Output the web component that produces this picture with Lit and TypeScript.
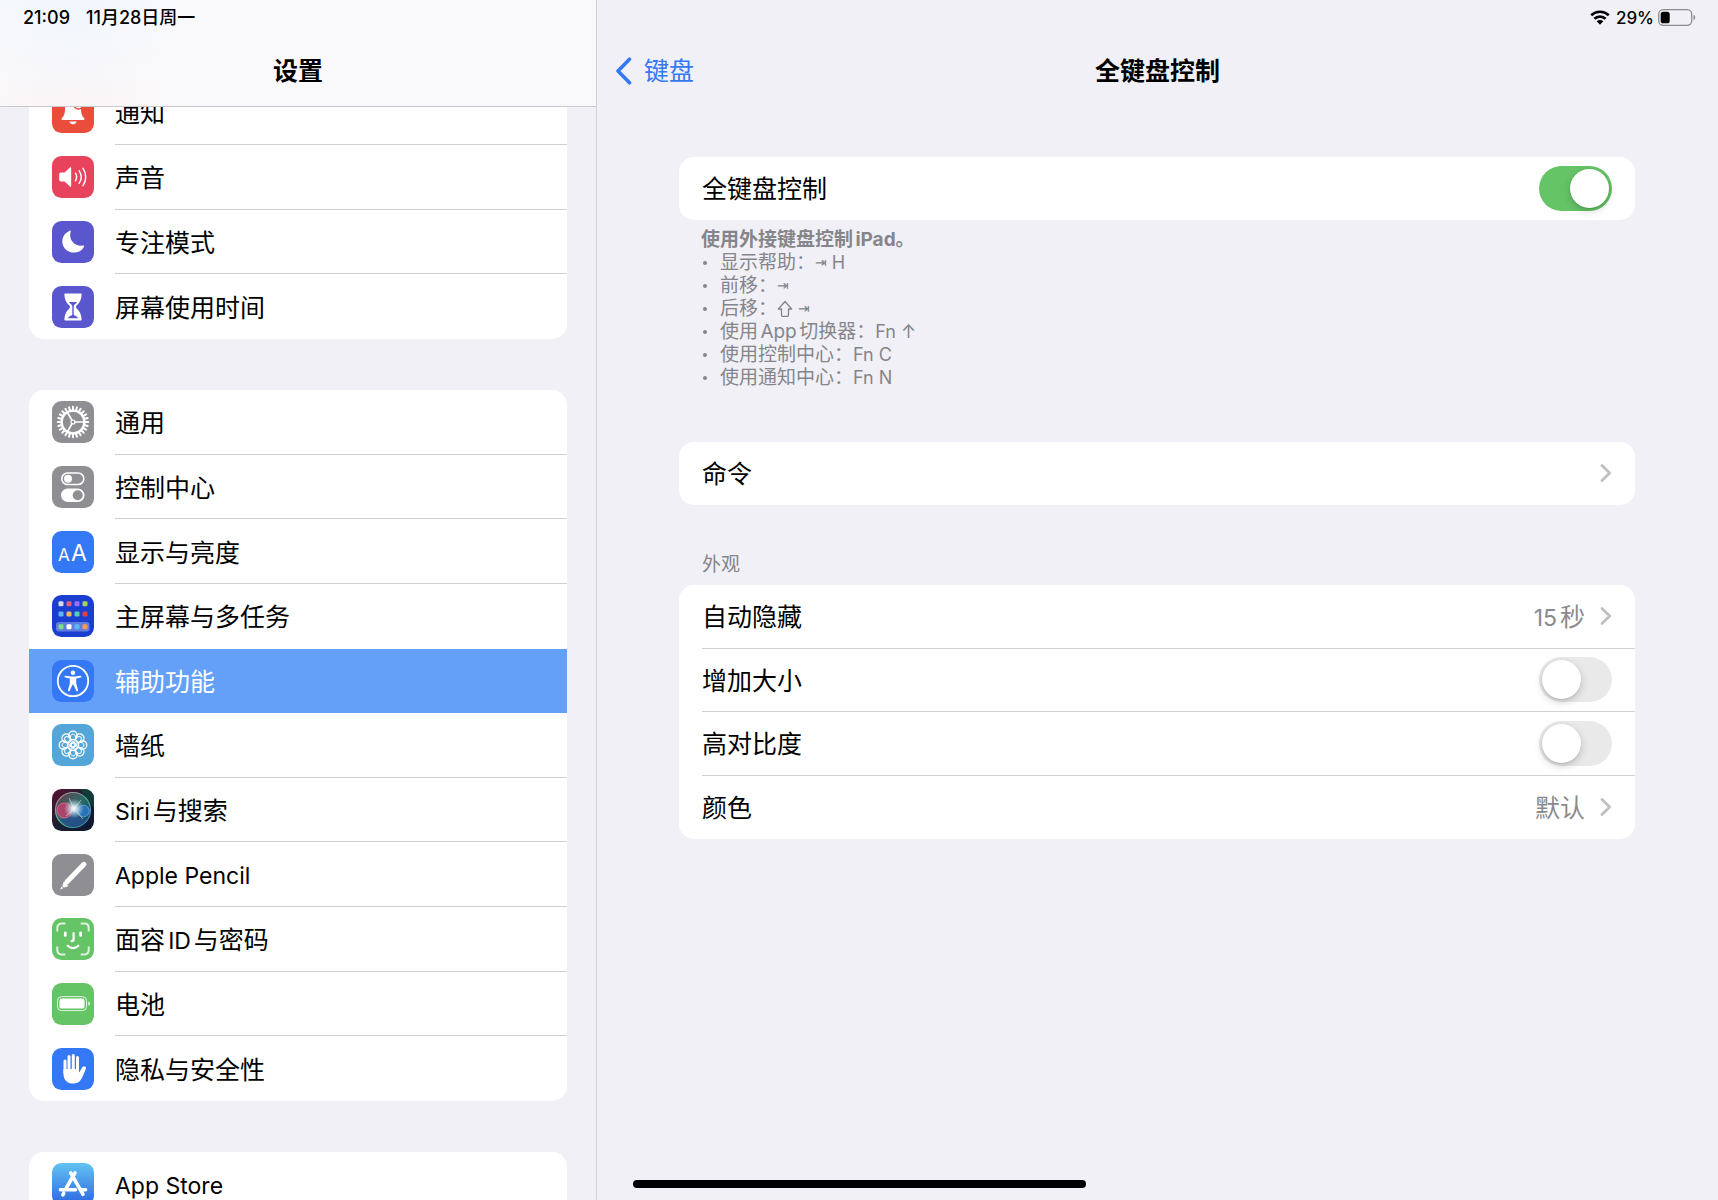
import { LitElement, html, svg, css, nothing, type SVGTemplateResult } from "lit";
import { customElement, property, state } from "lit/decorators.js";
import { classMap } from "lit/directives/class-map.js";

const range = (n: number) => Array.from({ length: n }, (_, i) => i);

/* Splits a label into runs so that Latin words can be set a little smaller than the Chinese text. */
const runs = (text: string) =>
  text
    .split(/([A-Za-z0-9][A-Za-z0-9 ]*)/)
    .filter(Boolean)
    .map((part) => (/^[A-Za-z0-9]/.test(part) ? html`<span class="latin">${part}</span>` : part));

const ICONS: Record<string, { fill: string; art: SVGTemplateResult }> = {
  bell: {
    fill: "#eb4d3d",
    art: svg`
      <path fill="#fff" d="M21 8c-5.6 0-8 4.200-8 9.500 0 5.500-1.200 7.500-3 9.400-1 1.100-.6 2.100.8 2.100h20.400c1.400 0 1.800-1 .8-2.100-1.800-1.900-3-3.900-3-9.400C29 12.200 26.600 8 21 8z"/>
      <path fill="#fff" d="M17.500 30.500h7c-.3 1.700-1.700 2.800-3.500 2.800s-3.200-1.100-3.500-2.800z"/>
      <circle cx="26.500" cy="13" r="5" fill="#fff" stroke="#eb4d3d" stroke-width="1.500"/>`,
  },
  sound: {
    fill: "#e8435c",
    art: svg`
      <path fill="#fff" d="M9 16.500h3.500l5.400-5.100c.6-.6 1.300-.2 1.300.6v18c0 .8-.7 1.200-1.300.6l-5.400-5.100H9c-1 0-1.800-.7-1.800-1.700v-5.600c0-1 .8-1.700 1.800-1.700z"/>
      <path fill="none" stroke="#fff" stroke-width="1.500" stroke-linecap="round" d="M23.400 17.200c1.500 2.300 1.500 5.300 0 7.600M27.200 14.800c2.500 3.700 2.500 8.700 0 12.400M31 12.400c3.600 5.200 3.600 12 0 17.200"/>`,
  },
  moon: {
    fill: "#5956ce",
    art: svg`<path fill="#fff" d="M17.700 9.700c.6-.5 1.300-.1 1 .7-2.400 7.600 3.200 15.200 12.400 14.200.8-.1 1.200.6.8 1.300C29.900 29.500 26.300 31.600 22 31.600c-6.500 0-11.700-4.900-11.700-11.200 0-4.500 2.600-8.600 7.400-10.700z"/>`,
  },
  hourglass: {
    fill: "#5956ce",
    art: svg`
      <path fill="#fff" d="M13.500 7.500h15c.8 0 1.200.5 1.100 1.300-.4 5.400-2 8.100-4.600 10.300-1.300 1.200-1.300 2.600 0 3.800 2.600 2.200 4.200 4.900 4.600 10.300.1.800-.3 1.300-1.100 1.300h-15c-.8 0-1.200-.5-1.100-1.300.4-5.400 2-8.100 4.600-10.300 1.300-1.200 1.300-2.600 0-3.800-2.600-2.200-4.200-4.900-4.600-10.300-.1-.8.300-1.300 1.100-1.300z"/>
      <path fill="#5956ce" d="M17 16h8c-.7 1.100-1.500 1.800-2.300 2.500-.8.700-1 1.300-1 2.500v7.500c0 1 3.200 1.300 4.500 3.700h-10.400c1.300-2.400 4.500-2.700 4.500-3.700V21c0-1.200-.2-1.800-1-2.500-.8-.7-1.600-1.400-2.300-2.500z"/>`,
  },
  gear: {
    fill: "#8e8e93",
    art: svg`
      <g stroke="#fff" stroke-width="2" stroke-linecap="round">
        ${range(24).map((i) => svg`<path d="M21 5.800v3.600" transform="rotate(${i * 15} 21 21)"/>`)}
      </g>
      <circle cx="21" cy="21" r="11.400" fill="none" stroke="#fff" stroke-width="2.400"/>
      <g stroke="#fff" stroke-width="1.700">
        ${[0, 120, 240].map((a) => svg`<path d="M22.500 21h10" transform="rotate(${a} 21 21)"/>`)}
      </g>
      <circle cx="21" cy="21" r="2" fill="none" stroke="#fff" stroke-width="1.200"/>`,
  },
  toggles: {
    fill: "#8e8e93",
    art: svg`
      <rect x="9.800" y="7" width="22" height="11.500" rx="5.750" fill="none" stroke="#fff" stroke-width="1.600"/>
      <circle cx="16" cy="12.700" r="4" fill="#fff"/>
      <rect x="9" y="22.500" width="23.500" height="13.500" rx="6.750" fill="#fff"/>
      <circle cx="25.700" cy="29.200" r="5" fill="#8e8e93"/>`,
  },
  text: {
    fill: "#3478f6",
    art: svg`
      <text class="glyph" x="6" y="30" font-size="17">A</text>
      <text class="glyph" x="19" y="30" font-size="23">A</text>`,
  },
  home: {
    fill: "#1a3fd0",
    art: svg`
      <rect x="4" y="27" width="33.500" height="9.500" rx="3" fill="#5f7de0"/>
      ${[
        ["#d9d9f2", "#ee5c6e", "#9b6cf5", "#a8cf62"],
        ["#5bb8f5", "#f5b553", "#5accb0", "#e0433f"],
        ["#79dd88", "#ffffff", "#5bb8f5", "#f59a52"],
      ].map((line, r) =>
        line.map((c, i) => svg`<rect x=${6.5 + i * 8} y=${[6.3, 16.5, 29.3][r]} width="5" height="5" rx="1.300" fill=${c}/>`),
      )}`,
  },
  access: {
    fill: "#3478f6",
    art: svg`
      <circle cx="21" cy="21" r="15.200" fill="none" stroke="#fff" stroke-width="1.800"/>
      <circle cx="21" cy="12.800" r="2.200" fill="#fff"/>
      <path fill="#fff" d="M13.600 15.800c2.300.4 4.500.7 7.400.7s5.100-.3 7.400-.7c1.200-.2 1.500 1.400.3 1.700l-4.500 1v5l1.800 6.600c.3 1.300-1.200 1.700-1.700.6L21.500 24.800h-1l-2.800 5.900c-.5 1.100-2 .7-1.700-.6l1.800-6.600v-5l-4.500-1c-1.200-.3-.9-1.900.3-1.700z"/>`,
  },
  flower: {
    fill: "#55a6d8",
    art: svg`
      <g fill="none" stroke="#fff">
        <g stroke-width="1.300">${range(8).map((i) => svg`<circle cx="21" cy="11.400" r="4.200" transform="rotate(${i * 45} 21 21)"/>`)}</g>
        <g stroke-width="1">${range(8).map((i) => svg`<ellipse cx="21" cy="14.600" rx="2.600" ry="4.600" transform="rotate(${i * 45} 21 21)"/>`)}</g>
        <circle cx="21" cy="21" r="2"/>
      </g>`,
  },
  siri: {
    fill: "url(#siri-bg)",
    art: svg`
      <defs>
        <linearGradient id="siri-bg" x1="0" y1="0" x2="1" y2="1">
          <stop offset="0" stop-color="#5a1230"/><stop offset=".5" stop-color="#1c1f33"/><stop offset="1" stop-color="#0b1730"/>
        </linearGradient>
        <radialGradient id="siri-glow"><stop offset="0" stop-color="#fff"/><stop offset=".3" stop-color="#e4f4ff" stop-opacity=".8"/><stop offset="1" stop-color="#b8e0f0" stop-opacity="0"/></radialGradient>
        <linearGradient id="siri-ring" x1="0" y1="0" x2="1" y2="1">
          <stop offset="0" stop-color="#d8788c"/><stop offset=".5" stop-color="#4fb79a"/><stop offset="1" stop-color="#2f76b8"/>
        </linearGradient>
        <linearGradient id="siri-orb" x1="0" y1="0" x2="1" y2="1">
          <stop offset="0" stop-color="#6b3f50"/><stop offset=".5" stop-color="#2b6a66"/><stop offset="1" stop-color="#133a6b"/>
        </linearGradient>
      </defs>
      <path d="M28 0h5a9 9 0 0 1 9 9v10z" fill="#123c38"/>
      <circle cx="21" cy="21" r="17.500" fill="url(#siri-orb)" stroke="url(#siri-ring)" stroke-width="1.200"/>
      <path d="M8 31c6-2 11-6 13-10 2 5 7 9 13 10-6 8-19 9-26 0z" fill="#27508f" opacity=".8"/>
      <circle cx="12.500" cy="21.500" r="7.500" fill="#d83a6e" fill-opacity=".7" stroke="#ef6a92" stroke-width=".8"/>
      <circle cx="31.500" cy="22" r="5.800" fill="#2f7fd6" fill-opacity=".7" stroke="#5aa9ee" stroke-width=".8"/>
      <circle cx="22" cy="19.500" r="10" fill="url(#siri-glow)"/>
      <path d="M22 20 17 9M22 20l7-9M22 20l9 10M22 20l-8 7" stroke="#fff" stroke-width=".8" opacity=".6"/>`,
  },
  pencil: {
    fill: "#8e8e93",
    art: svg`
      <path stroke="#fff" stroke-width="5" stroke-linecap="round" d="M32 10.300 15 27.800"/>
      <path fill="#fff" d="M11.800 27.400l4.800 4.600-4.600 1.700-1.700-1.700zM9.600 32.600l1.700 1.600-3.400 1.200z"/>`,
  },
  face: {
    fill: "#65c466",
    art: svg`
      <path fill="none" stroke="#fff" stroke-opacity=".8" stroke-width="2" d="M5.300 13.500V10c0-2.700 1.700-4.400 4.400-4.400h3.600M28.700 5.600h3.600c2.700 0 4.400 1.700 4.400 4.400v3.500M36.700 28.500V32c0 2.700-1.700 4.400-4.400 4.400h-3.600M13.300 36.400H9.700c-2.700 0-4.400-1.700-4.400-4.400v-3.500"/>
      <g fill="none" stroke="#fff" stroke-width="2.200" stroke-linecap="round">
        <path stroke-width="2.800" d="M13.300 14.800v2.600M28.600 14.800v2.600"/>
        <path d="M21.600 15v6.300c0 1.300-.6 1.900-2 1.900M15.700 27.700c3 3.100 7.600 3.100 10.600 0"/>
      </g>`,
  },
  battery: {
    fill: "#65c466",
    art: svg`
      <rect x="5.500" y="13.600" width="29" height="14" rx="4" fill="none" stroke="#fff" stroke-opacity=".8" stroke-width="1"/>
      <rect x="7.500" y="15.600" width="25" height="10" rx="2.200" fill="#fff"/>
      <path fill="#fff" fill-opacity=".8" d="M36.300 18.300c2.400.8 2.400 3.800 0 4.600z"/>`,
  },
  hand: {
    fill: "#3478f6",
    art: svg`
      <g stroke="#fff" stroke-width="3" stroke-linecap="round">
        <path d="M13 13v12M17 8.600V23M21.300 7.400V23M25.500 9.400V23"/>
      </g>
      <path fill="#fff" d="M11.500 21h15.500v3.500c1.200-1.200 2-3.200 2.800-4.600.9-1.500 2.200-1.700 3.400-1.200.9.400 1 1 .6 2-1.500 4-3 7.900-4.800 10.800-2 3-4.500 4-7.800 4-5.700 0-9.700-3.600-9.700-9.600z"/>`,
  },
  store: {
    fill: "url(#store-bg)",
    art: svg`
      <defs><linearGradient id="store-bg" x1="0" y1="0" x2="0" y2="1">
        <stop offset="0" stop-color="#62c3f2"/><stop offset="1" stop-color="#2c66e3"/>
      </linearGradient></defs>
      <g stroke="#fff" stroke-width="3.600" stroke-linecap="round">
        <path d="M23 9.800 14.300 25M18.700 9.800 31 31.300M8.500 26.800h15M28.800 26.800h4.800M11.700 30.300l-.8 1.500"/>
      </g>`,
  },
};

interface Item { icon: string; label: string; }

const GROUPS: Item[][] = [
  [
    { icon: "bell", label: "通知" },
    { icon: "sound", label: "声音" },
    { icon: "moon", label: "专注模式" },
    { icon: "hourglass", label: "屏幕使用时间" },
  ],
  [
    { icon: "gear", label: "通用" },
    { icon: "toggles", label: "控制中心" },
    { icon: "text", label: "显示与亮度" },
    { icon: "home", label: "主屏幕与多任务" },
    { icon: "access", label: "辅助功能" },
    { icon: "flower", label: "墙纸" },
    { icon: "siri", label: "Siri与搜索" },
    { icon: "pencil", label: "Apple Pencil" },
    { icon: "face", label: "面容ID与密码" },
    { icon: "battery", label: "电池" },
    { icon: "hand", label: "隐私与安全性" },
  ],
  [{ icon: "store", label: "App Store" }],
];

@customElement("app-icon")
class AppIcon extends LitElement {
  @property() name = "";

  static styles = css`
    :host { display: block; width: 42px; height: 42px; }
    .art { display: block; width: 42px; height: 42px; }
    .glyph { fill: #fff; font-family: Inter, "Liberation Sans", sans-serif; }
  `;

  render() {
    const icon = ICONS[this.name];
    if (!icon) return nothing;
    return html`<svg class="art" viewBox="0 0 42 42" aria-hidden="true">
      <rect width="42" height="42" rx="9.500" fill=${icon.fill} />${icon.art}
    </svg>`;
  }
}

@customElement("settings-sidebar")
class SettingsSidebar extends LitElement {
  @state() private selected = "access";

  static styles = css`
    :host { display: block; height: 100%; overflow-y: auto; scrollbar-width: none; box-sizing: border-box; border-right: 1px solid #d3d2d8; }
    .header {
      position: sticky; top: 0; z-index: 1; box-sizing: border-box; height: 107px;
      display: grid; grid-template-rows: 35px 1fr;
      border-bottom: 1px solid #c9c8cd;
      background:
        radial-gradient(circle at 12% 0, #f1f7fe 0, transparent 22%),
        radial-gradient(circle at 12% 100%, #fcf5f5 0, transparent 22%),
        #f9f9fb;
    }
    .status { display: flex; align-items: center; gap: 16px; padding: 0 23px; font-size: 18px; line-height: 24px; font-weight: 500; text-autospace: no-autospace; }
    .title { margin: 0; font-size: 25px; line-height: 32px; font-weight: 700; text-align: center; padding-top: 20px; }
    .list { display: grid; gap: 51px; padding: 0 29px; margin-top: -27px; }
    .group { display: grid; background: #fff; border-radius: 15px; overflow: hidden; margin: 0; padding: 0; list-style: none; }
    .group.four { min-height: 259px; }
    .group.eleven { min-height: 711px; }
    .item { display: grid; min-height: 64px; }
    .row { display: grid; grid-template-columns: 42px 1fr; gap: 21px; align-items: center; padding-left: 23px; color: #000; text-decoration: none; font-size: 25px; line-height: 32px; }
    .label { align-self: stretch; display: flex; align-items: center; padding-top: 3px; border-bottom: 1px solid #d0d0d3; }
    .latin { font-size: 23px; }
    .item:last-child .label, .row.on .label { border-bottom-color: transparent; }
    .row.on { background: #64a0f8; color: #fff; }
    .group.eleven .item:has(+ .item .on) .label { border-bottom-color: transparent; }
  `;

  render() {
    return html`
      <header class="header">
        <div class="status"><span>21:09</span><span>11月28日周一</span></div>
        <h1 class="title">设置</h1>
      </header>
      <nav class="list">
        ${GROUPS.map((g) => html`
          <ul class=${classMap({ group: true, four: g.length === 4, eleven: g.length === 11 })}>
            ${g.map((it) => html`
              <li class="item">
                <a class=${classMap({ row: true, on: it.icon === this.selected })} href="#${it.icon}"
                  @click=${() => (this.selected = it.icon)}>
                  <app-icon .name=${it.icon}></app-icon><span class="label"><span>${runs(it.label)}</span></span>
                </a>
              </li>`)}
          </ul>`)}
      </nav>`;
  }
}

const chevron = html`<svg class="chevron" viewBox="0 0 12 20" aria-hidden="true">
  <path d="M2 2.500 9.700 10 2 17.500" fill="none" stroke="#c0c0c3" stroke-width="2.800" stroke-linecap="round" stroke-linejoin="round" />
</svg>`;

@customElement("keyboard-pane")
class KeyboardPane extends LitElement {
  static styles = css`
    :host { display: block; height: 100%; overflow-y: auto; scrollbar-width: none; }
    .status { display: flex; justify-content: flex-end; align-items: center; height: 35px; padding-right: 22px; font-size: 17px; line-height: 24px; font-weight: 500; }
    .wifi { width: 20px; height: 15px; margin-right: 6px; }
    .cell { width: 38px; height: 17px; margin-left: 4px; }
    .bar { display: grid; grid-template-columns: 1fr auto 1fr; align-items: center; height: 72px; padding: 0 18px; }
    .back { justify-self: start; display: flex; align-items: center; gap: 12px; color: #3478f6; text-decoration: none; font-size: 25px; line-height: 32px; }
    .arrow { width: 17px; height: 28px; }
    .title { margin: 0; font-size: 25px; line-height: 32px; font-weight: 700; }
    .content { padding: 50px 83px 0 82px; }
    .card { display: grid; background: #fff; border-radius: 15px; margin: 0; padding: 0 0 0 23px; }
    .card.four { min-height: 254px; }
    .row { box-sizing: border-box; min-height: 63px; display: flex; align-items: center; justify-content: space-between; padding-right: 23px; border-bottom: 1px solid #d0d0d3; font-size: 25px; line-height: 32px; color: #000; text-decoration: none; }
    .row:last-child { border-bottom-color: transparent; }
    .name, .value { padding-top: 2px; }
    .latin { font-size: 23px; }
    .end { display: flex; align-items: center; gap: 15px; color: #8a8a8e; }
    .chevron { width: 12px; height: 20px; }
    .switch {
      appearance: none; margin: 0; width: 73px; height: 45px; border-radius: 23px; background: #e9e9ea;
      display: flex; align-items: center; padding: 0 3px; box-sizing: border-box;
    }
    .switch::before { content: ""; width: 39px; height: 39px; border-radius: 50%; background: #fff; box-shadow: 0 3px 8px rgba(0, 0, 0, 0.18), 0 1px 2px rgba(0, 0, 0, 0.1); }
    .switch:checked { background: #65c466; justify-content: flex-end; }
    .note { padding: 8px 22px 0; font-size: 19px; line-height: 23px; color: #85858a; }
    .lead { margin: 0; font-weight: 700; }
    .tips { margin: 0 0 53px; padding: 0; list-style: none; }
    .tip { display: grid; grid-template-columns: 19px 1fr; }
    .dot { align-self: center; justify-self: start; width: 4px; height: 4px; margin-left: 2px; border-radius: 50%; background: #85858a; }
    .keys { display: inline-flex; align-items: center; gap: 5px; height: 23px; vertical-align: top; font-size: 18px; }
    .tab { font-family: "DejaVu Sans", sans-serif; font-size: 14px; }
    .shift { width: 16px; height: 18px; }
    .caption { margin: 48px 0 9px; padding-left: 23px; font-size: 19px; line-height: 23px; font-weight: 400; color: #85858a; }
  `;

  private tip(label: string, keys: string[]) {
    return html`<li class="tip"><span class="dot"></span><span>${label}<span class="keys">${keys.map((k) =>
      k === "⇧"
        ? html`<svg class="shift" viewBox="0 0 16 18" role="img" aria-label="Shift">
            <path d="M8 1.500 1.300 9h3.200v6.300c0 .6.400 1 1 1h5c.6 0 1-.4 1-1V9h3.200z" fill="none" stroke="#85858a" stroke-width="1.300" stroke-linejoin="round" />
          </svg>`
        : html`<span class=${classMap({ tab: k === "⇥" })}>${k}</span>`,
    )}</span></span></li>`;
  }

  render() {
    return html`
      <div class="status">
        <svg class="wifi" viewBox="0 0 20 15" aria-hidden="true">
          <g fill="none" stroke="#000" stroke-width="2.700">
            <path d="M1.200 5.200c5-4.600 12.600-4.600 17.600 0" /><path d="M4.400 8.700c3.200-2.900 8-2.900 11.200 0" />
          </g>
          <path d="M6.700 11.300c1.900-1.700 4.700-1.700 6.600 0L10 14.800z" />
        </svg>
        <span>29%</span>
        <svg class="cell" viewBox="0 0 38 17" aria-hidden="true">
          <rect x=".7" y=".7" width="33" height="15.600" rx="4.500" fill="none" stroke="#8d8d91" stroke-width="1.300" />
          <rect x="2.700" y="2.700" width="9" height="11.600" rx="2.600" />
          <path d="M35.500 5.800c2.300.8 2.300 4.600 0 5.400z" fill="#8d8d91" />
        </svg>
      </div>
      <header class="bar">
        <a class="back" href="#keyboard">
          <svg class="arrow" viewBox="0 0 17 28" aria-hidden="true">
            <path d="M14.500 2.200 3 14l11.500 11.800" fill="none" stroke="#3478f6" stroke-width="3.600" stroke-linecap="round" stroke-linejoin="round" />
          </svg>
          <span>键盘</span>
        </a>
        <h2 class="title">全键盘控制</h2>
      </header>
      <div class="content">
        <div class="card">
          <div class="row"><label class="name" for="full">全键盘控制</label><input class="switch" id="full" type="checkbox" checked /></div>
        </div>
        <div class="note">
          <p class="lead">使用外接键盘控制iPad。</p>
          <ul class="tips">
            ${this.tip("显示帮助：", ["⇥", "H"])}
            ${this.tip("前移：", ["⇥"])}
            ${this.tip("后移：", ["⇧", "⇥"])}
            ${this.tip("使用App切换器：", ["Fn", "↑"])}
            ${this.tip("使用控制中心：", ["Fn", "C"])}
            ${this.tip("使用通知中心：", ["Fn", "N"])}
          </ul>
        </div>
        <div class="card"><a class="row" href="#commands"><span class="name">命令</span>${chevron}</a></div>
        <h3 class="caption">外观</h3>
        <div class="card four">
          <a class="row" href="#auto-hide"><span class="name">自动隐藏</span><span class="end"><span class="value">${runs("15秒")}</span>${chevron}</span></a>
          <div class="row"><label class="name" for="large">增加大小</label><input class="switch" id="large" type="checkbox" /></div>
          <div class="row"><label class="name" for="contrast">高对比度</label><input class="switch" id="contrast" type="checkbox" /></div>
          <a class="row" href="#color"><span class="name">颜色</span><span class="end"><span class="value">默认</span>${chevron}</span></a>
        </div>
      </div>`;
  }
}

@customElement("app-root")
class AppRoot extends LitElement {
  static styles = css`
    :host {
      display: grid; grid-template-columns: minmax(0, 597fr) minmax(0, 1121fr); height: 100vh;
      position: relative; background: #f1f0f6; color: #000;
      font-family: Inter, "Noto Sans CJK SC", sans-serif; text-autospace: normal;
    }
    .indicator { position: absolute; left: 50%; bottom: 12px; width: 453px; height: 8px; margin-left: -226px; border-radius: 4px; background: #000; }
  `;

  render() {
    return html`
      <settings-sidebar></settings-sidebar>
      <keyboard-pane></keyboard-pane>
      <div class="indicator"></div>`;
  }
}
